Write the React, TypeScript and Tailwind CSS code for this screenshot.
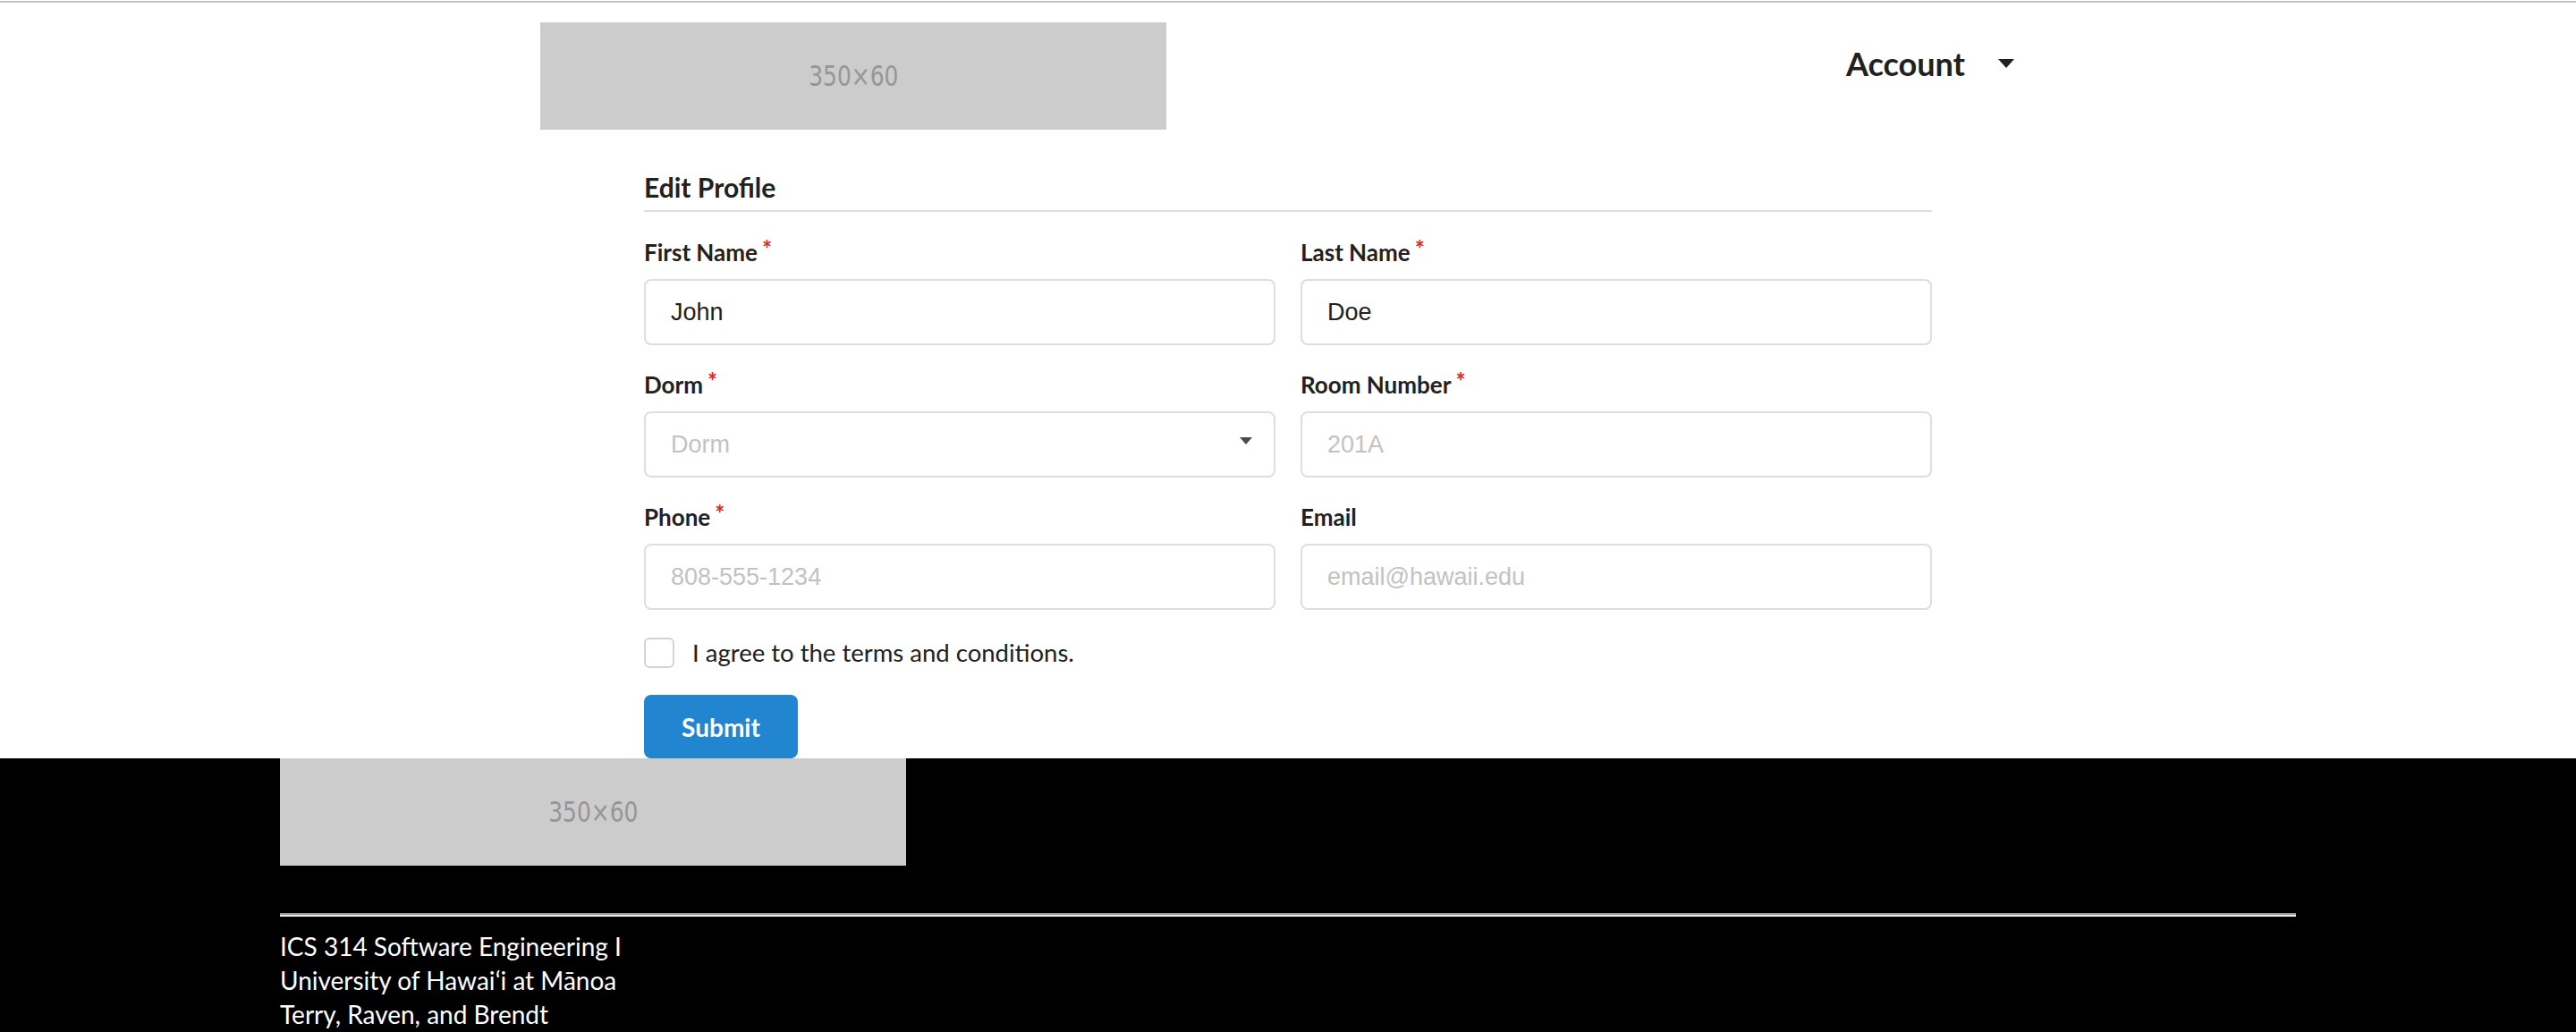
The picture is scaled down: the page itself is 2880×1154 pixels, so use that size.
import React from 'react';

function Placeholder() {
  return (
    <div className="flex h-[120px] w-[700px] shrink-0 items-center justify-center bg-[#cccccc]">
      <span className="inline-block scale-x-[0.78] font-['DejaVu_Sans',sans-serif] text-[32px] leading-none text-[#969696]">350×60</span>
    </div>
  );
}

function Label({ text, required }: { text: string; required?: boolean }) {
  return (
    <div className="mb-[12px] text-[26px] font-bold leading-[36px] text-[#212121]">
      {text}
      {required && <span className="ml-[5px] inline-block -translate-y-[4px] text-[#db2828]">*</span>}
    </div>
  );
}

const inputCls =
  "h-[74px] w-full rounded-[8px] border-2 border-[#dedede] bg-white px-[28px] font-['Liberation_Sans',Arial,sans-serif] text-[27px] text-[#212121] outline-none placeholder:text-[#c2c2c2]";

function TextField({ label, required, value, placeholder }: { label: string; required?: boolean; value?: string; placeholder?: string }) {
  return (
    <div>
      <Label text={label} required={required} />
      <input className={inputCls} defaultValue={value} placeholder={placeholder} />
    </div>
  );
}

function SelectField() {
  return (
    <div>
      <Label text="Dorm" required />
      <div className="flex h-[74px] w-full items-center justify-between rounded-[8px] border-2 border-[#dedede] bg-white pl-[28px] pr-[24px]">
        <span className="font-['Liberation_Sans',Arial,sans-serif] text-[27px] text-[#c2c2c2]">Dorm</span>
        <svg width="14" height="8" viewBox="0 0 14 8" className="-mt-[8px]">
          <polygon points="0,0 14,0 7,8" fill="#4a4a4a" />
        </svg>
      </div>
    </div>
  );
}

export default function App() {
  return (
    <div className="min-h-screen bg-white font-['Lato',sans-serif]">
      <div className="mt-[1px] h-[2px] bg-[#c4c4c4]" />

      <header className="flex items-start pl-[604px] pr-[628px] pt-[22px]">
        <Placeholder />
        <div className="ml-auto mt-[28px] flex items-center gap-[37px]">
          <span className="text-[36px] font-bold leading-[36px] text-[#212121]">Account</span>
          <svg width="18" height="10" viewBox="0 0 18 10">
            <polygon points="0,0 18,0 9,10" fill="#212121" />
          </svg>
        </div>
      </header>

      <main className="mx-auto mt-[45px] w-[1440px]">
        <h4 className="border-b-2 border-[#dedede] pb-[7px] text-[30px] font-bold leading-[38px] text-[#212121]">Edit Profile</h4>

        <div className="mt-[27px] grid grid-cols-2 gap-x-[28px] gap-y-[26px]">
          <TextField label="First Name" required value="John" />
          <TextField label="Last Name" required value="Doe" />
          <SelectField />
          <TextField label="Room Number" required placeholder="201A" />
          <TextField label="Phone" required placeholder="808-555-1234" />
          <TextField label="Email" placeholder="email@hawaii.edu" />
        </div>

        <label className="mt-[31px] flex items-center gap-[20px]">
          <span className="h-[34px] w-[34px] rounded-[6px] border-2 border-[#d4d4d5] bg-white" />
          <span className="text-[27.5px] leading-[34px] text-[#212121]">I agree to the terms and conditions.</span>
        </label>

        <button className="mt-[30px] block h-[71px] w-[172px] rounded-[8px] bg-[#2185d0] text-[28px] font-bold text-white">
          Submit
        </button>
      </main>

      <footer className="bg-black pb-[40px]">
        <div className="mx-auto w-[2254px]">
          <Placeholder />
          <div className="mt-[53px] border-b-2 border-t-2 border-b-[#ececec] border-t-[#9a9a9a]" />
          <div className="mt-[14px] text-[28px] leading-[38px] text-white">
            <div>ICS 314 Software Engineering I</div>
            <div>University of Hawaiʻi at Mānoa</div>
            <div>Terry, Raven, and Brendt</div>
          </div>
        </div>
      </footer>
    </div>
  );
}
